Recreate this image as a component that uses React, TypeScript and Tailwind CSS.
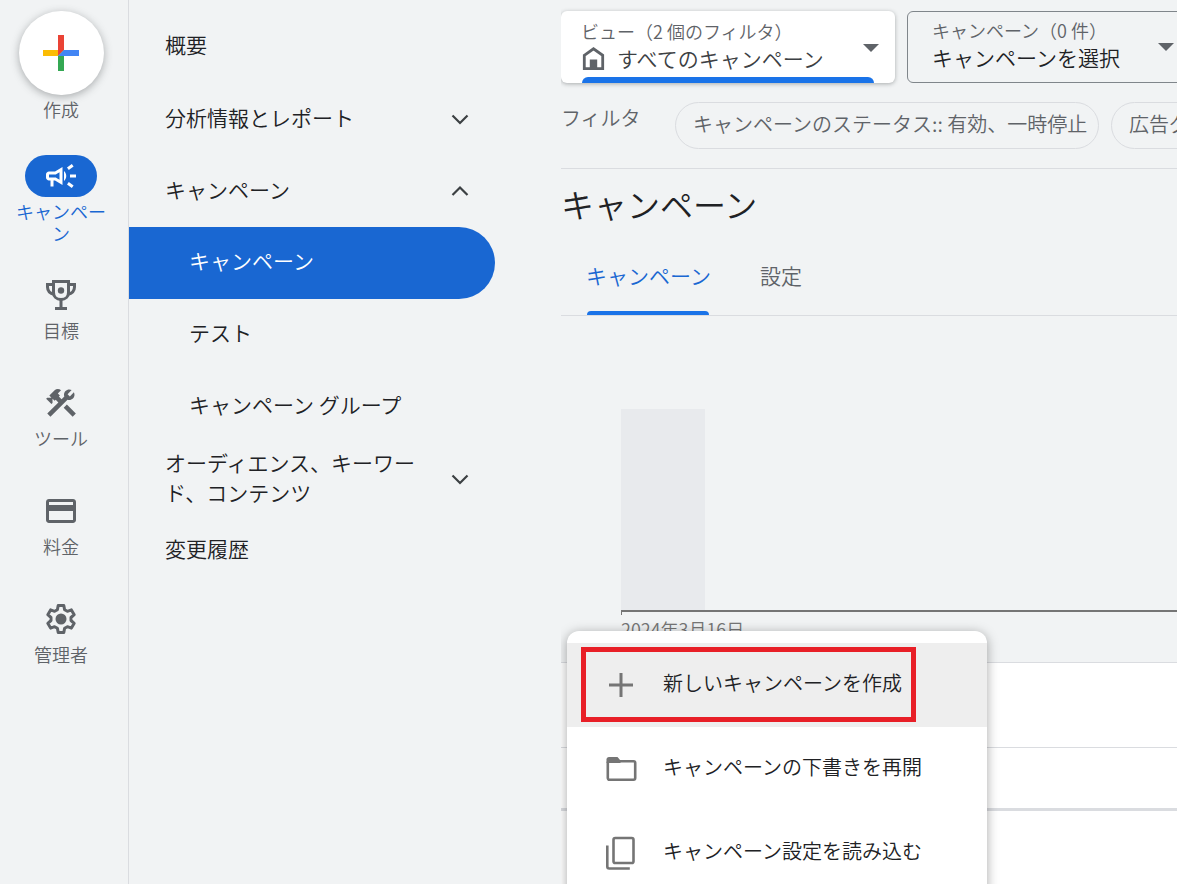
import type { ReactNode } from "react";
import { MdConstruction, MdCreditCard, MdOutlineCampaign } from "react-icons/md";

function CreateIcon() {
  return (
    <svg viewBox="0 0 36 36" className="size-9" aria-hidden="true">
      <path fill="#ea4335" d="M15 0h6v15l-6 6z" />
      <path fill="#fbbc04" d="M0 15h15v6H0z" />
      <path fill="#34a853" d="M15 21l6-6v21h-6z" />
      <path fill="#4285f4" d="M21 15h15v6H15z" />
    </svg>
  );
}

function TrophyIcon() {
  return (
    <svg viewBox="0 0 36 36" className="size-9" aria-hidden="true">
      <g fill="none" stroke="currentColor" strokeWidth="3">
        <path d="M10.5 4.5h15v11c0 4-3 7-7.500 7s-7.500-3-7.500-7z" />
        <path d="M10.500 7.500h-6v2.500c0 4 2.500 6.500 7 7.500M25.500 7.500h6v2.500c0 4-2.500 6.500-7 7.500" />
        <path d="M18 22v9M12 31.500h12" />
      </g>
      <circle cx="18" cy="13.500" r="3.200" fill="currentColor" />
    </svg>
  );
}

function GearIcon() {
  return (
    <svg viewBox="0 0 36 36" className="size-9" aria-hidden="true">
      <path
        fill="none"
        stroke="currentColor"
        strokeWidth="3"
        strokeLinejoin="round"
        d="M15.200 4.500h5.600l.8 4.200 2.800 1.600 4-1.400 2.800 4.800-3.200 2.800v3l3.200 2.800-2.800 4.800-4-1.400-2.800 1.600-.8 4.200h-5.600l-.8-4.200-2.800-1.600-4 1.400-2.800-4.800L8 19.500v-3l-3.200-2.800 2.800-4.800 4 1.400 2.800-1.600z"
      />
      <circle cx="18" cy="18" r="5.500" fill="currentColor" />
    </svg>
  );
}

function HomeIcon() {
  return (
    <svg viewBox="0 0 24 24" className="size-6" aria-hidden="true">
      <path fill="none" stroke="#5f6368" strokeWidth="2.800" d="M3.300 9.300 12.500 2.800l9.200 6.500v13.300H3.300z" />
      <path fill="#5f6368" d="M8.800 13.500h7.400V23H8.800z" />
    </svg>
  );
}

function PlusIcon() {
  return (
    <svg viewBox="0 0 36 36" className="size-9" aria-hidden="true">
      <path fill="currentColor" d="M16.500 6h3v10.500H30v3H19.500V30h-3V19.500H6v-3h10.500z" />
    </svg>
  );
}

function FolderIcon() {
  return (
    <svg viewBox="0 0 36 36" className="size-9" aria-hidden="true">
      <path fill="currentColor" d="M6 6h8.500l3 3.500V12H3.500V8.500C3.500 7 4.500 6 6 6z" />
      <rect x="4.800" y="10.200" width="27.400" height="18.500" rx="1.600" fill="none" stroke="currentColor" strokeWidth="2.600" />
    </svg>
  );
}

function CopyIcon() {
  return (
    <svg viewBox="0 0 36 36" className="size-9" aria-hidden="true">
      <g fill="none" stroke="currentColor" strokeWidth="2.600">
        <rect x="10.500" y="3" width="20" height="25" rx="1.800" />
        <path d="M4.300 10.500v21c0 1.200.8 2 2 2h20.500" />
      </g>
    </svg>
  );
}

function Chevron({ up = false }: { up?: boolean }) {
  return (
    <svg viewBox="0 0 18 18" className="size-[18px] shrink-0" aria-hidden="true">
      <path fill="none" stroke="#3c4043" strokeWidth="2.200" d={up ? "M1.500 13 9 5.500l7.500 7.500" : "M1.500 5.500 9 13l7.500-7.500"} />
    </svg>
  );
}

function Caret() {
  return (
    <svg viewBox="0 0 16 8" className="h-2 w-4 shrink-0" aria-hidden="true">
      <path fill="#5f6368" d="M0 0h16L8 8z" />
    </svg>
  );
}

function RailItem({ icon, label }: { icon: ReactNode; label: string }) {
  return (
    <a href="#" className="flex h-[108px] flex-col items-center text-[#5f6368]">
      {icon}
      <span className="mt-1.5 text-lg leading-[22px]">{label}</span>
    </a>
  );
}

function Rail() {
  return (
    <nav className="flex w-[129px] shrink-0 flex-col border-r border-[#dadce0] pt-[11px] pr-1.5">
      <button className="flex flex-col items-center text-[#5f6368]">
        <span className="flex h-[84px] w-[85px] items-center justify-center rounded-full bg-white shadow-[0_2px_8px_rgba(60,64,67,0.4)]">
          <CreateIcon />
        </span>
        <span className="mt-[3px] text-lg leading-[22px]">作成</span>
      </button>
      <a href="#" className="mt-[35px] mb-[33px] flex flex-col items-center px-3.5 text-center text-[#1967d2]">
        <span className="flex h-[42px] w-[72px] items-center justify-center rounded-full bg-[#1967d2] text-white">
          <MdOutlineCampaign className="size-9" />
        </span>
        <span className="mt-[3px] text-lg leading-[22px] break-all">キャンペーン</span>
      </a>
      <RailItem icon={<TrophyIcon />} label="目標" />
      <RailItem icon={<MdConstruction className="size-9" />} label="ツール" />
      <RailItem icon={<MdCreditCard className="size-9" />} label="料金" />
      <RailItem icon={<GearIcon />} label="管理者" />
    </nav>
  );
}

function NavSection({ label, open }: { label: string; open: boolean }) {
  return (
    <button className="flex h-[72px] w-full items-center justify-between gap-8 pr-[92px] pl-9 text-left" aria-expanded={open}>
      <span className="pb-1 leading-[30px] break-all">{label}</span>
      <Chevron up={open} />
    </button>
  );
}

function SideNav() {
  return (
    <nav className="w-[432px] shrink-0 pt-[11px] text-[21px] text-[#202124]">
      <a href="#" className="flex h-[72px] items-center pb-1 pl-9">概要</a>
      <NavSection label="分析情報とレポート" open={false} />
      <NavSection label="キャンペーン" open />
      <a href="#" className="mr-[66px] flex h-[72px] items-center rounded-r-full bg-[#1967d2] pb-1 pl-[60px] text-white">キャンペーン</a>
      <a href="#" className="flex h-[72px] items-center pb-1 pl-[60px]">テスト</a>
      <a href="#" className="flex h-[72px] items-center pb-1 pl-[60px]">キャンペーン グループ</a>
      <NavSection label="オーディエンス、キーワード、コンテンツ" open={false} />
      <a href="#" className="flex h-[72px] items-center pb-1 pl-9">変更履歴</a>
    </nav>
  );
}

function ScopeBar() {
  return (
    <div className="flex gap-3 pt-[11px]">
      <button className="flex h-[72px] w-[334px] shrink-0 flex-col rounded-md bg-white pt-2 text-left shadow-[0_1px_4px_rgba(60,64,67,0.4)]">
        <span className="flex w-full grow items-center justify-between pr-4 pl-5">
          <span className="flex flex-col pb-1">
            <span className="text-lg leading-6 text-[#5f6368]">ビュー（2 個のフィルタ）</span>
            <span className="flex items-center gap-3 text-[21px] leading-[30px] text-[#3c4043]">
              <HomeIcon />
              すべてのキャンペーン
            </span>
          </span>
          <Caret />
        </span>
        <span className="mx-[21px] h-1.5 shrink-0 self-stretch rounded-t-md bg-[#1a73e8]" />
      </button>
      <button className="flex h-[72px] w-[284px] shrink-0 items-center justify-between rounded-md border border-[#80868b] pr-4 pl-6 text-left">
        <span className="flex flex-col pb-1">
          <span className="text-lg leading-6 text-[#5f6368]">キャンペーン（0 件）</span>
          <span className="text-[21px] leading-[30px] text-[#202124]">キャンペーンを選択</span>
        </span>
        <Caret />
      </button>
    </div>
  );
}

function FilterBar() {
  return (
    <div className="flex gap-3 border-b border-[#dadce0] pt-[19px] pb-[19px] text-xl text-[#5f6368]">
      <span className="w-[102px] shrink-0 leading-8">フィルタ</span>
      <button className="h-[47px] w-[424px] shrink-0 rounded-full border border-[#dadce0] px-[17px] pb-1 text-left whitespace-nowrap">
        キャンペーンのステータス:: 有効、一時停止
      </button>
      <button className="h-[47px] shrink-0 rounded-full border border-[#dadce0] px-[17px] pb-1 whitespace-nowrap">広告グループ</button>
    </div>
  );
}

function Tabs() {
  return (
    <div role="tablist" className="flex h-[75px] border-b border-[#dadce0] px-[25px] text-[21px]">
      <button role="tab" aria-selected="true" className="flex flex-col items-center text-[#1967d2]">
        <span className="flex grow items-center">キャンペーン</span>
        <span className="h-1 w-[122px] rounded-t-md bg-[#1a73e8]" />
      </button>
      <button role="tab" aria-selected="false" className="ml-[49px] pb-1 text-[#5f6368]">設定</button>
    </div>
  );
}

function Chart() {
  return (
    <div className="h-[346px] pt-[93px] pl-[60px]">
      <svg className="h-[206px] w-full" role="img" aria-label="グラフ">
        <rect x="0" y="0" width="84" height="202" fill="#e8eaed" />
        <path d="M0 201h900v2H0z" fill="#757575" />
        <path d="M0 202h1v4H0z" fill="#757575" />
      </svg>
      <p className="text-lg leading-7 text-[#757575]">2024年3月16日</p>
    </div>
  );
}

function MenuItem({ icon, label, active = false }: { icon: ReactNode; label: string; active?: boolean }) {
  return (
    <button role="menuitem" className={`flex h-[84px] w-full items-center gap-6 pl-9 text-left ${active ? "bg-[#eeeeee]" : "bg-white"}`}>
      <span className="text-[#757575]">{icon}</span>
      <span className="pb-1">{label}</span>
    </button>
  );
}

function CreateMenu() {
  return (
    <div role="menu" className="absolute top-[631px] left-1.5 w-[420px] rounded-t-xl bg-white pt-3 text-xl text-[#202124] shadow-[0_2px_12px_rgba(0,0,0,0.35)]">
      <MenuItem icon={<PlusIcon />} label="新しいキャンペーンを作成" active />
      <MenuItem icon={<FolderIcon />} label="キャンペーンの下書きを再開" />
      <MenuItem icon={<CopyIcon />} label="キャンペーン設定を読み込む" />
      <div className="pointer-events-none absolute top-4 left-3.5 h-[75px] w-[335px] border-5 border-[#e81f27]" />
    </div>
  );
}

export default function App() {
  return (
    <div className="flex h-screen overflow-hidden bg-[#f1f3f4] font-['Noto_Sans_CJK_JP',sans-serif] font-[350]">
      <Rail />
      <SideNav />
      <main className="relative flex min-w-0 grow flex-col overflow-x-clip">
        <ScopeBar />
        <FilterBar />
        <h1 className="h-[72px] text-[33px] leading-[70px] text-[#202124]">キャンペーン</h1>
        <Tabs />
        <Chart />
        <section className="grow border-t border-[#dadce0] bg-white">
          <div className="h-[84px]" />
          <div className="h-[64px] border-t border-b-3 border-t-[#dadce0] border-b-[#dadce0]" />
        </section>
        <CreateMenu />
      </main>
    </div>
  );
}
